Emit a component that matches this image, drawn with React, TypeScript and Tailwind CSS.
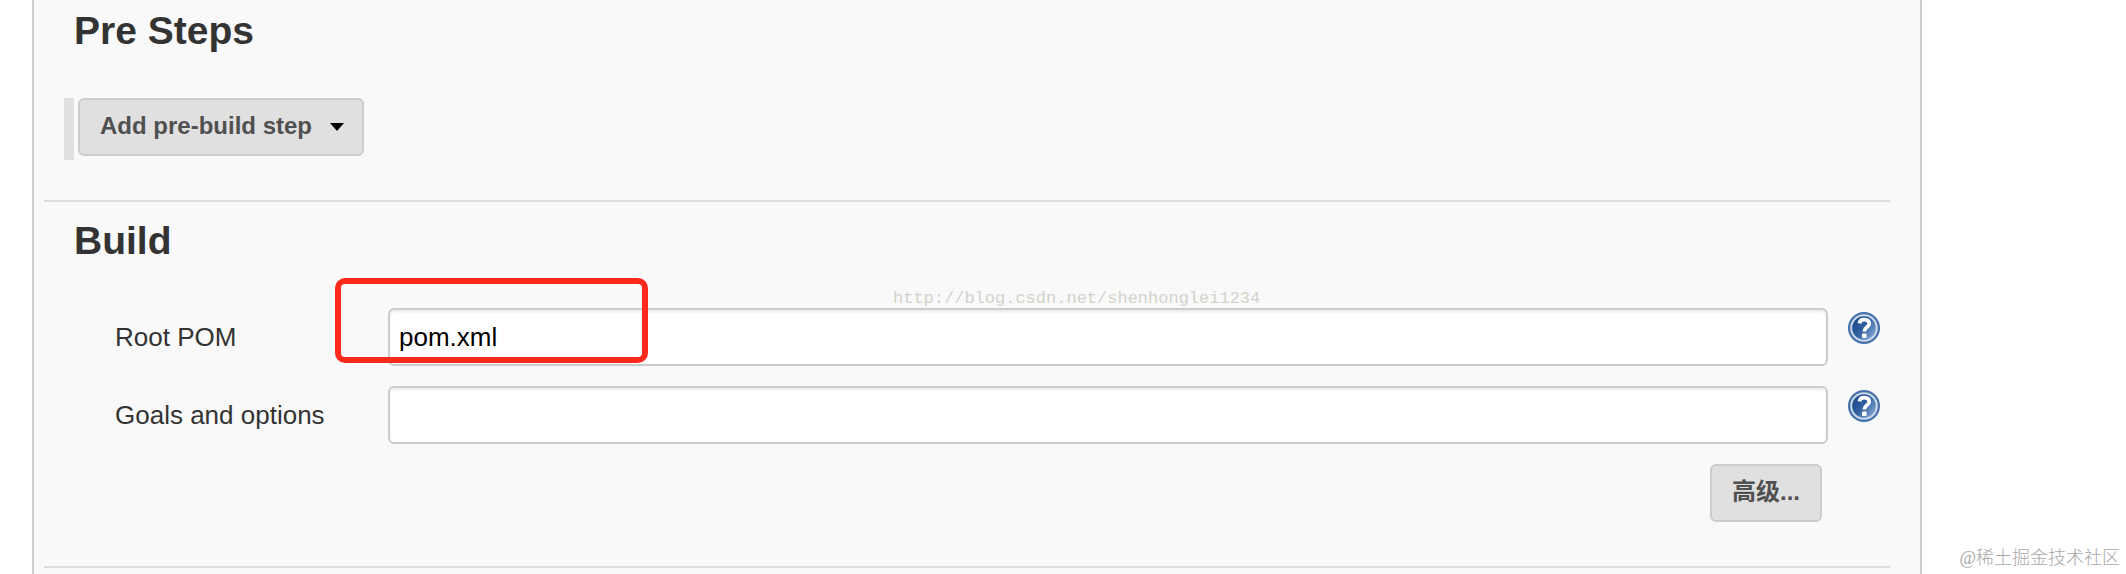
import { useState } from 'react';
import type { ReactNode } from 'react';

const fields = [
  { id: 'rootPom', label: 'Root POM', value: 'pom.xml', highlighted: true },
  { id: 'goals', label: 'Goals and options', value: '', highlighted: false }
];

function HelpIcon({ id }: { id: string }) {
  return (
    <svg viewBox="0 0 32 32" className="w-8 h-8" aria-hidden="true">
      <defs>
        <linearGradient id={`${id}-fill`} x1="0.1" y1="0.2" x2="0.9" y2="0.8">
          <stop offset="0" stopColor="#1c4a8c" />
          <stop offset="0.45" stopColor="#2f5f9f" />
          <stop offset="1" stopColor="#7fa2d0" />
        </linearGradient>
      </defs>
      <circle cx="16" cy="16" r="16" fill="#4470aa" />
      <circle cx="16" cy="16" r="12.8" fill={`url(#${id}-fill)`} stroke="#ccd9ea" strokeWidth="2" />
      <path
        d="M11.4 11.4c.4-2.600 2.100-3.800 4.800-3.800 3 0 5 1.500 5 4.100 0 3.700-4.900 3.500-4.900 7.700"
        fill="none"
        stroke="#fff"
        strokeWidth="3.800"
      />
      <rect x="14" y="21.400" width="4.600" height="4.600" rx="1" fill="#fff" />
    </svg>
  );
}

function SectionTitle({ children }: { children: ReactNode }) {
  return <h1 className="pl-[30px] text-[39px] leading-[46px] font-bold text-[#333]">{children}</h1>;
}

export default function App() {
  const [values, setValues] = useState<Record<string, string>>(
    Object.fromEntries(fields.map(({ id, value }) => [id, value]))
  );

  return (
    <div className="relative min-h-screen bg-white font-['Liberation_Sans','Noto_Sans_CJK_SC',sans-serif] text-[#333]">
      <main className="relative min-h-screen ml-8 mr-[204px] pl-[10px] pr-[30px] border-x-2 border-[#ccc] bg-[#f9f9f9]">
        {/* Pre Steps */}
        <section className="pt-2 pb-10 border-b-2 border-[#ddd]">
          <SectionTitle>Pre Steps</SectionTitle>
          <div className="mt-11 ml-5 pl-1 pb-1 border-l-[10px] border-[#e0e0e0]">
            <button
              type="button"
              className="flex items-center h-[58px] pl-5 pr-[18px] gap-[18px] rounded-md border-2 border-[#ccc] bg-[#e0e0e0] text-2xl font-bold text-[#505050]"
            >
              <span className="pb-0.5">Add pre-build step</span>
              <svg viewBox="0 0 14 8" className="w-[14px] h-2" aria-hidden="true">
                <path d="M0 0h14L7 8z" fill="#000" />
              </svg>
            </button>
          </div>
        </section>

        {/* Build */}
        <section className="pt-4 pb-11 border-b-2 border-[#ddd]">
          <SectionTitle>Build</SectionTitle>
          <div className="mt-11 flex flex-col gap-5">
            {fields.map(({ id, label, highlighted }) => (
              <div key={id} className="relative flex items-start pl-[71px] pr-[10px]">
                <label htmlFor={id} className="w-[273px] text-[26px] leading-[58px]">
                  {label}
                </label>
                <input
                  id={id}
                  type="text"
                  value={values[id]}
                  onChange={(e) => setValues({ ...values, [id]: e.target.value })}
                  className="flex-1 min-w-0 h-[58px] px-[9px] rounded-md border-2 border-[#ccc] bg-white text-[26px] text-black shadow-[inset_0_2px_3px_rgba(0,0,0,0.08)] outline-none"
                />
                <button type="button" aria-label={`Help for ${label}`} className="ml-5 mt-1">
                  <HelpIcon id={id} />
                </button>
                {highlighted && (
                  <div className="absolute left-[291px] -top-[30px] w-[313px] h-[85px] rounded-[10px] border-6 border-[#ff2a1c] pointer-events-none" />
                )}
              </div>
            ))}
          </div>
          <div className="mt-5 flex justify-end pr-[68px]">
            <button
              type="button"
              className="h-[58px] px-5 pb-0.5 rounded-md border-2 border-[#ccc] bg-[#e0e0e0] text-2xl font-bold text-[#505050]"
            >
              高级...
            </button>
          </div>
        </section>

        {/* Watermark over the form */}
        <span className="absolute left-[859px] top-[287px] font-['Liberation_Mono',monospace] text-[17px] leading-6 text-[#d3d3ca] pointer-events-none">
          http://blog.csdn.net/shenhonglei1234
        </span>
      </main>

      <span className="absolute right-[6px] bottom-1 font-['Liberation_Serif','Noto_Sans_CJK_SC',serif] text-lg leading-6 font-light text-[#a8a8a8] pointer-events-none">
        @稀土掘金技术社区
      </span>
    </div>
  );
}
